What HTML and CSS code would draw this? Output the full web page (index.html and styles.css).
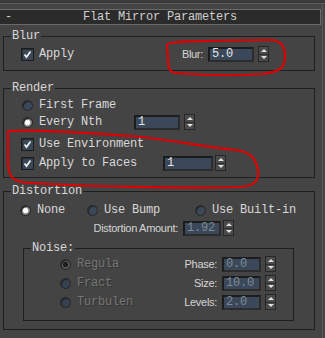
FILE: index.html
```html
<!DOCTYPE html>
<html lang="en">
<head>
    <meta charset="UTF-8">
    <title>Flat Mirror Parameters</title>
    <link rel="stylesheet" href="styles.css">
</head>
<body>
    <div class="topline"></div>
    <div class="rollout">
        <div class="rollout-head">
            <span class="minus">-</span>
            <span class="head-title">Flat Mirror Parameters</span>
        </div>

        <div class="group group-blur">
            <span class="group-title">Blur</span>
            <div class="row">
                <span class="check"><svg viewBox="0 0 11 11"><polyline points="2.5,5.5 4.5,8 8.5,2.5" /></svg></span>
                <span>Apply</span>
                <span class="push">
                    <span class="slabel">Blur:</span>
                    <span class="num w46">5.0</span>
                    <span class="spin"><i class="up"></i><i class="down"></i></span>
                </span>
            </div>
        </div>

        <div class="group group-render">
            <span class="group-title">Render</span>
            <div class="row">
                <span class="radio"></span><span>First Frame</span>
            </div>
            <div class="row r2">
                <span class="radio on"></span><span class="lbl-nth">Every Nth</span>
                <span class="num w46">1</span>
                <span class="spin"><i class="up"></i><i class="down"></i></span>
            </div>
            <div class="row r3">
                <span class="check"><svg viewBox="0 0 11 11"><polyline points="2.5,5.5 4.5,8 8.5,2.5" /></svg></span>
                <span>Use Environment</span>
            </div>
            <div class="row r4">
                <span class="check"><svg viewBox="0 0 11 11"><polyline points="2.5,5.5 4.5,8 8.5,2.5" /></svg></span>
                <span class="lbl-faces">Apply to Faces</span>
                <span class="num w50">1</span>
                <span class="spin tight"><i class="up"></i><i class="down"></i></span>
            </div>
        </div>

        <div class="group group-dist">
            <span class="group-title">Distortion</span>
            <div class="row">
                <span class="opt opt-none"><span class="radio on"></span>None</span>
                <span class="opt opt-bump"><span class="radio"></span>Use Bump</span>
                <span class="opt"><span class="radio"></span>Use Built-in</span>
            </div>
            <div class="row amount">
                <span class="slabel amount-label">Distortion Amount:</span>
                <span class="num w38 off">1.92</span>
                <span class="spin tight"><i class="up"></i><i class="down"></i></span>
            </div>

            <div class="group group-noise">
                <span class="group-title">Noise:</span>
                <div class="row">
                    <span class="radio dis on"></span><span class="dim">Regula</span>
                    <span class="slabel nlabel">Phase:</span>
                    <span class="num w39 off">0.0</span>
                    <span class="spin"><i class="up"></i><i class="down"></i></span>
                </div>
                <div class="row nr">
                    <span class="radio dis"></span><span class="dim">Fract</span>
                    <span class="slabel nlabel">Size:</span>
                    <span class="num w39 off">10.0</span>
                    <span class="spin"><i class="up"></i><i class="down"></i></span>
                </div>
                <div class="row nr">
                    <span class="radio dis"></span><span class="dim">Turbulen</span>
                    <span class="slabel nlabel">Levels:</span>
                    <span class="num w39 off">2.0</span>
                    <span class="spin"><i class="up"></i><i class="down"></i></span>
                </div>
            </div>
        </div>
    </div>

    <!-- hand drawn red marks on top of the screenshot -->
    <svg class="marks" width="325" height="338" viewBox="0 0 325 338">
        <path d="M167 45 C167 40, 220 41, 270 40 C281 40, 285 46, 285 56 C285 67, 281 72, 262 74 C235 76, 200 75, 176 73 C169 72, 168 68, 168 58 Z" />
        <path d="M8 131 C40 129, 90 133, 130 136 C170 139, 200 147, 236 150 C252 152, 256 160, 258 170 C259 180, 256 186, 240 187 C180 189, 80 186, 30 183 C14 182, 9 178, 8 165 Z" />
    </svg>
</body>
</html>
```

FILE: styles.css
```css
body {
    margin: 0;
    width: 325px;
    height: 338px;
    overflow: hidden;
    position: relative;
    background: #444444;
    color: #d8d8d8;
    font-family: 'Liberation Mono', monospace;
    font-size: 12px;
    letter-spacing: -0.2px;
}
.topline {
    height: 3px;
    background: #3a3a3a;
    border-bottom: 1px solid #5c5c5c;
}
.rollout {
    width: 322px;
    padding-top: 5px;
    padding-bottom: 20px;
    border-right: 1px solid #5a5a5a;
}
.rollout-head {
    display: grid;
    grid-template-columns: 20px 1fr 20px;
    width: 320px;
    height: 14px;
    line-height: 14px;
    background: #2b2b2b;
    border-top: 1px solid #6a6a6a;
    border-bottom: 1px solid #6a6a6a;
    border-right: 1px solid #6a6a6a;
    box-sizing: content-box;
    color: #cfcfcf;
}
.minus {
    padding-left: 5px;
}
.head-title {
    text-align: center;
}
.group {
    position: relative;
    margin-left: 3px;
    width: 310px;
    border: 1px solid #1f1f1f;
}
.group-title {
    position: absolute;
    top: -8px;
    left: 7px;
    padding: 0 1px;
    line-height: 14px;
    background: #444444;
}
.row {
    display: flex;
    align-items: center;
    height: 16px;
    white-space: nowrap;
}
.push {
    display: flex;
    align-items: center;
    margin-left: auto;
}

/* blur */
.group-blur {
    margin-top: 11px;
    padding: 9px 45px 8px 17px;
    width: 248px;
}

/* render */
.group-render {
    margin-top: 17px;
    padding: 8px 0 6px 18px;
    width: 292px;
}
.r2 { margin-top: 1px; }
.r3 { margin-top: 6px; margin-left: -1px; }
.r4 { margin-top: 3px; margin-left: -1px; }
.lbl-nth { width: 95px; }
.lbl-faces { width: 124px; }

/* distortion */
.group-dist {
    margin-top: 13px;
    padding: 10px 0 8px 0;
}
.group-dist > .row:first-of-type {
    padding-left: 16px;
}
.opt {
    display: flex;
    align-items: center;
}
.opt-none { width: 67px; }
.opt-bump { width: 108px; }
.amount {
    margin-top: 2px;
}
.amount-label {
    width: 174px;
    text-align: right;
    margin-right: 7px;
}
.group-noise {
    margin: 12px 0 0 19px;
    width: 233px;
    padding: 7px 0 10px 36px;
}
.nr { margin-top: 3px; }
.dim {
    width: 70px;
    color: #767676;
    text-shadow: 1px 1px 0 #333;
}
.nlabel {
    width: 70px;
    text-align: right;
    margin-right: 2px;
}

/* controls */
.slabel {
    font-family: 'Liberation Sans', sans-serif;
    font-size: 11px;
    letter-spacing: -0.3px;
    color: #d4d4d4;
    margin-right: 5px;
}
.check {
    width: 11px;
    height: 11px;
    margin-right: 5px;
    background: #3b4859;
    border: 1px solid #1c1c1c;
    box-shadow: inset 1px 1px 0 #2a2f36;
    display: flex;
}
.check svg {
    width: 11px;
    height: 11px;
    fill: none;
    stroke: #f2f2f2;
    stroke-width: 1.7;
}
.radio {
    width: 9px;
    height: 9px;
    margin-right: 6px;
    border-radius: 50%;
    background: #3b4859;
    border: 1px solid #262626;
    box-shadow: inset 1px 1px 0 #22272e;
}
.radio.on {
    background: radial-gradient(circle, #ffffff 0 2.2px, #9a9a9a 3px, #6a6a6a 5px);
}
.radio.dis {
    background: #36414f;
}
.radio.dis.on {
    background: radial-gradient(circle, #1e1e1e 0 2.2px, #5a5a5a 3px, #4a4a4a 5px);
}
.num {
    box-sizing: border-box;
    height: 15px;
    line-height: 11px;
    padding-left: 2px;
    background: #3b4859;
    border: 2px solid #1c1c1c;
    border-right-color: #2c2c2c;
    border-bottom-color: #2c2c2c;
    color: #e4e4e4;
}
.num.off { color: #7d8896; }
.w38 { width: 38px; }
.w39 { width: 39px; }
.w46 { width: 46px; }
.w50 { width: 50px; }
.spin {
    display: flex;
    flex-direction: column;
    box-sizing: border-box;
    width: 11px;
    height: 16px;
    margin-left: 4px;
    background: #4b4b4b;
    border: 1px solid #262626;
}
.spin.tight { margin-left: 2px; }
.spin i {
    flex: 1;
    display: flex;
    align-items: center;
    justify-content: center;
}
.spin .up {
    border-bottom: 1px solid #2e2e2e;
}
.spin i::before {
    content: '';
    border-left: 3px solid transparent;
    border-right: 3px solid transparent;
}
.spin .up::before { border-bottom: 3px solid #e0e0e0; }
.spin .down::before { border-top: 3px solid #e0e0e0; }

.marks {
    position: absolute;
    left: 0;
    top: 0;
    pointer-events: none;
}
.marks path {
    fill: none;
    stroke: #dd0000;
    stroke-width: 2.2;
    stroke-linecap: round;
}
```
